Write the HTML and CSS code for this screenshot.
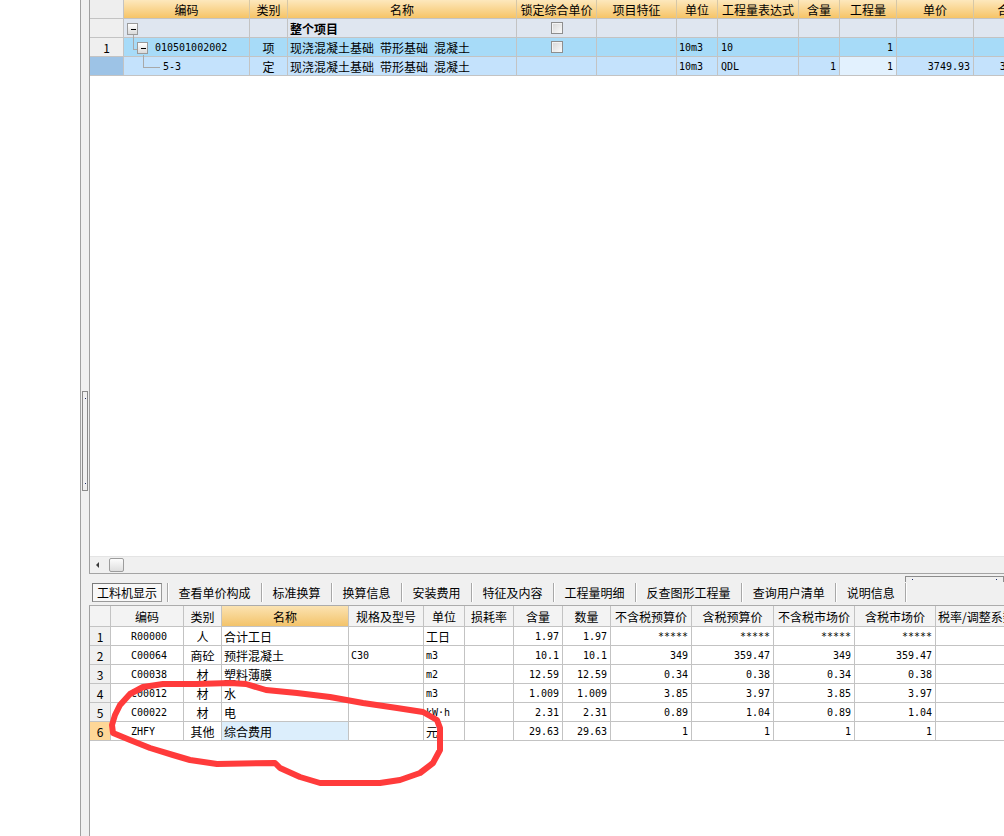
FILE: index.html
```html
<!DOCTYPE html>
<html lang="zh-CN">
<head>
<meta charset="utf-8">
<title>工料机显示</title>
<link rel="stylesheet" href="styles.css">
</head>
<body>
<div class="app">
  <div class="blank"></div>
  <div class="strip"><div class="vhandle"><i></i><i></i></div></div>
  <div class="main">
    <div class="top-panel">
      <div class="tgrid">
        <div class="tr thead">
          <div class="c rh"></div>
          <div class="c">编码</div>
          <div class="c">类别</div>
          <div class="c">名称</div>
          <div class="c">锁定综合单价</div>
          <div class="c">项目特征</div>
          <div class="c">单位</div>
          <div class="c">工程量表达式</div>
          <div class="c">含量</div>
          <div class="c">工程量</div>
          <div class="c">单价</div>
          <div class="c">合价</div>
        </div>
        <div class="tr r-all">
          <div class="c rh"></div>
          <div class="c tree"><span class="tbox b0"></span></div>
          <div class="c"></div>
          <div class="c l bold">整个项目</div>
          <div class="c ctr"><span class="chk"></span></div>
          <div class="c"></div>
          <div class="c"></div>
          <div class="c"></div>
          <div class="c"></div>
          <div class="c"></div>
          <div class="c"></div>
          <div class="c"></div>
        </div>
        <div class="tr r-item">
          <div class="c rh ctr">1</div>
          <div class="c tree l n p1"><span class="tline t1"></span><span class="tbox b1"></span>010501002002</div>
          <div class="c ctr">项</div>
          <div class="c l">现浇混凝土基础&ensp;带形基础&ensp;混凝土</div>
          <div class="c ctr"><span class="chk"></span></div>
          <div class="c"></div>
          <div class="c l n">10m3</div>
          <div class="c l n px">10</div>
          <div class="c"></div>
          <div class="c r n">1</div>
          <div class="c"></div>
          <div class="c"></div>
        </div>
        <div class="tr r-sub">
          <div class="c rh rh-sel"></div>
          <div class="c tree l n p2"><span class="tline t2"></span>5-3</div>
          <div class="c ctr">定</div>
          <div class="c l">现浇混凝土基础&ensp;带形基础&ensp;混凝土</div>
          <div class="c"></div>
          <div class="c"></div>
          <div class="c l n">10m3</div>
          <div class="c l n px">QDL</div>
          <div class="c r n">1</div>
          <div class="c r n cur">1</div>
          <div class="c r n">3749.93</div>
          <div class="c r n">3749.93</div>
        </div>
      </div>
      <div class="hscroll"><span class="arrow"></span><span class="thumb"></span></div>
    </div>

    <div class="gap"><div class="hhandle"><i></i><i></i></div></div>

    <div class="tabs">
      <div class="tab sel">工料机显示</div><div class="sep"></div>
      <div class="tab">查看单价构成</div><div class="sep"></div>
      <div class="tab">标准换算</div><div class="sep"></div>
      <div class="tab">换算信息</div><div class="sep"></div>
      <div class="tab">安装费用</div><div class="sep"></div>
      <div class="tab">特征及内容</div><div class="sep"></div>
      <div class="tab">工程量明细</div><div class="sep"></div>
      <div class="tab">反查图形工程量</div><div class="sep"></div>
      <div class="tab">查询用户清单</div><div class="sep"></div>
      <div class="tab">说明信息</div><div class="sep"></div>
    </div>

    <div class="bottom-panel">
      <div class="bgrid">
        <div class="br bhead">
          <div class="c"></div>
          <div class="c">编码</div>
          <div class="c">类别</div>
          <div class="c hsel">名称</div>
          <div class="c">规格及型号</div>
          <div class="c">单位</div>
          <div class="c">损耗率</div>
          <div class="c">含量</div>
          <div class="c">数量</div>
          <div class="c">不含税预算价</div>
          <div class="c">含税预算价</div>
          <div class="c">不含税市场价</div>
          <div class="c">含税市场价</div>
          <div class="c lft">税率/调整系数</div>
        </div>
        <div class="br">
          <div class="c rh ctr">1</div>
          <div class="c l n code">R00000</div>
          <div class="c ctr">人</div>
          <div class="c l">合计工日</div>
          <div class="c"></div>
          <div class="c l">工日</div>
          <div class="c"></div>
          <div class="c r n">1.97</div>
          <div class="c r n">1.97</div>
          <div class="c r n">*****</div>
          <div class="c r n">*****</div>
          <div class="c r n">*****</div>
          <div class="c r n">*****</div>
          <div class="c"></div>
        </div>
        <div class="br">
          <div class="c rh ctr">2</div>
          <div class="c l n code">C00064</div>
          <div class="c ctr">商砼</div>
          <div class="c l">预拌混凝土</div>
          <div class="c l n">C30</div>
          <div class="c l n">m3</div>
          <div class="c"></div>
          <div class="c r n">10.1</div>
          <div class="c r n">10.1</div>
          <div class="c r n">349</div>
          <div class="c r n">359.47</div>
          <div class="c r n">349</div>
          <div class="c r n">359.47</div>
          <div class="c"></div>
        </div>
        <div class="br">
          <div class="c rh ctr">3</div>
          <div class="c l n code">C00038</div>
          <div class="c ctr">材</div>
          <div class="c l">塑料薄膜</div>
          <div class="c"></div>
          <div class="c l n">m2</div>
          <div class="c"></div>
          <div class="c r n">12.59</div>
          <div class="c r n">12.59</div>
          <div class="c r n">0.34</div>
          <div class="c r n">0.38</div>
          <div class="c r n">0.34</div>
          <div class="c r n">0.38</div>
          <div class="c"></div>
        </div>
        <div class="br">
          <div class="c rh ctr">4</div>
          <div class="c l n code">C00012</div>
          <div class="c ctr">材</div>
          <div class="c l">水</div>
          <div class="c"></div>
          <div class="c l n">m3</div>
          <div class="c"></div>
          <div class="c r n">1.009</div>
          <div class="c r n">1.009</div>
          <div class="c r n">3.85</div>
          <div class="c r n">3.97</div>
          <div class="c r n">3.85</div>
          <div class="c r n">3.97</div>
          <div class="c"></div>
        </div>
        <div class="br">
          <div class="c rh ctr">5</div>
          <div class="c l n code">C00022</div>
          <div class="c ctr">材</div>
          <div class="c l">电</div>
          <div class="c"></div>
          <div class="c l n">kW·h</div>
          <div class="c"></div>
          <div class="c r n">2.31</div>
          <div class="c r n">2.31</div>
          <div class="c r n">0.89</div>
          <div class="c r n">1.04</div>
          <div class="c r n">0.89</div>
          <div class="c r n">1.04</div>
          <div class="c"></div>
        </div>
        <div class="br">
          <div class="c rh ctr rh-cur">6</div>
          <div class="c l n code">ZHFY</div>
          <div class="c ctr">其他</div>
          <div class="c l cur">综合费用</div>
          <div class="c"></div>
          <div class="c l">元</div>
          <div class="c"></div>
          <div class="c r n">29.63</div>
          <div class="c r n">29.63</div>
          <div class="c r n">1</div>
          <div class="c r n">1</div>
          <div class="c r n">1</div>
          <div class="c r n">1</div>
          <div class="c"></div>
        </div>
      </div>
    </div>
  </div>

  <svg class="scribble" width="1004" height="836" viewBox="0 0 1004 836">
    <path d="M246 684 L266 690 L297 693 L330 697 L363 703 L397 708 L423 712 L437 720 L440 728 L440 750 L433 763 L420 773 L400 780 L380 783 L320 783 L300 777 L280 768 L275 763 L217 764 L190 760 L173 755 L150 748 L130 740 L113 733 L112 725 L115 715 L120 705 L130 694 L143 687 L163 684 L197 684 L230 683 Z" fill="none" stroke="#ff3b3b" stroke-width="6" stroke-linejoin="round" stroke-linecap="round"/>
  </svg>
</div>
</body>
</html>
```

FILE: styles.css
```css
* { box-sizing: border-box; }
html, body { margin: 0; padding: 0; background: #fff; overflow: hidden; }
body {
  font-family: "Noto Sans CJK SC", "Noto Sans", sans-serif;
  font-size: 12px;
  color: #000;
}
.app {
  position: relative;
  display: flex;
  width: 1004px;
  height: 836px;
}
.blank { width: 80px; background: #fff; }
.strip {
  width: 9px;
  border-left: 1px solid #a0a0a0;
  background: #f0f0f0;
  padding: 391px 0 0 1px;
}
.vhandle {
  width: 6px;
  height: 100px;
  border: 1px solid #8a8a8a;
  display: flex;
  flex-direction: column;
  justify-content: space-between;
  align-items: center;
  padding: 6px 0;
}
.vhandle i, .hhandle i { display: block; width: 1px; height: 1px; background: #1c2a6a; }

.main {
  width: 915px;
  display: flex;
  flex-direction: column;
  background: #f0f0f0;
  overflow: hidden;
}
.top-panel {
  height: 574px;
  border-left: 1px solid #a0a0a0;
  border-bottom: 1px solid #a4a4a4;
  display: flex;
  flex-direction: column;
}
.tgrid { flex: 1; background: #fff; overflow: hidden; }
.hscroll {
  height: 17px;
  background: #f0f0f0;
  border-top: 1px solid #e4e4e4;
  display: flex;
  align-items: center;
  padding-left: 6px;
}
.arrow {
  width: 0; height: 0;
  border-right: 3px solid #3a3a3a;
  border-top: 3px solid transparent;
  border-bottom: 3px solid transparent;
}
.thumb {
  margin-left: 10px;
  width: 15px;
  height: 14px;
  border: 1px solid #9c9c9c;
  border-radius: 2px;
  background: linear-gradient(#fcfcfc, #dedede);
}

/* grid cells */
.c {
  display: flex;
  align-items: center;
  justify-content: center;
  border-right: 1px solid #c3c3c3;
  border-bottom: 1px solid #c3c3c3;
  white-space: nowrap;
  overflow: hidden;
  padding: 0 2px;
}
.c.l { justify-content: flex-start; }
.c.r { justify-content: flex-end; padding-right: 3px; }
.c.ctr { justify-content: center; }
.n { font-family: "DejaVu Sans Mono", "Liberation Mono", monospace; font-size: 10px; }
.bold { font-weight: bold; }
.px { padding-left: 3px; }

.tr {
  display: grid;
  grid-template-columns: 34px 126px 38px 229px 80px 80px 41px 81px 41px 57px 77px 72px;
  height: 19px;
}
.thead .c {
  background: linear-gradient(#fde8bd, #f6c467);
  border-right-color: #d6c7a6;
  border-bottom-color: #c3c3c3;
  padding: 0;
}
.thead .c.rh { background: #eeeeee; border-right-color: #c3c3c3; }
.c.rh { background: #efefef; }
.r-all .c { background: #dfe6f0; }
.r-item .c { background: #a7dbf8; }
.r-sub .c { background: #c4e2fc; }
.r-all .c.rh, .r-item .c.rh { background: #efefef; }
.r-sub .c.rh-sel { background: #9dc3e6; }
.r-sub .c.cur { background: #e2f1fe; }
.r-sub .c:last-child { justify-content: flex-end; }

.tree { position: relative; overflow: visible; }
.p1 { padding-left: 31px; }
.p2 { padding-left: 39px; }
.tbox {
  position: absolute;
  width: 11px;
  height: 12px;
  border: 1px solid #9a9a9a;
  background: linear-gradient(#ffffff, #dadada);
}
.tbox::after {
  content: "";
  position: absolute;
  left: 3px;
  top: 5px;
  width: 5px;
  height: 1px;
  background: #000;
}
.b0 { left: 3px; top: 4px; }
.b1 { left: 13px; top: 4px; }
.tline {
  position: absolute;
  border-left: 1px solid #a8a8a8;
  border-bottom: 1px solid #a8a8a8;
}
.t1 { left: 9px; top: -3px; width: 5px; height: 15px; }
.t2 { left: 19px; top: -2px; width: 17px; height: 13px; }

.chk {
  display: block;
  width: 12px;
  height: 12px;
  border: 1px solid #8e8e8e;
  background: linear-gradient(135deg, #d6d6d6, #fbfbfb);
  box-shadow: inset 1px 1px 0 #f4f4f4;
}

/* middle */
.gap {
  height: 8px;
  display: flex;
  justify-content: flex-end;
  align-items: flex-end;
}
.hhandle {
  width: 99px;
  height: 6px;
  border: 1px solid #8c8c8c;
  border-bottom: none;
  display: flex;
  justify-content: space-between;
  align-items: center;
  padding: 0 6px;
}
.tabs {
  height: 21px;
  display: flex;
  align-items: stretch;
  padding-left: 3px;
}
.tab {
  display: flex;
  align-items: center;
  padding: 0 10.5px;
  white-space: nowrap;
}
.tab.sel {
  margin: 1px 5px 1px 0;
  padding: 0 4px;
  border: 1px solid #7c7c7c;
  border-right-color: #9a9a9a;
  border-bottom-color: #9a9a9a;
  background: #f8f8f8;
}
.sep {
  width: 1px;
  margin: 1px 0;
  background: #a8a8a8;
  box-shadow: 1px 0 0 #ffffff;
}

/* bottom grid */
.bottom-panel {
  flex: 1;
  margin-top: 2px;
  background: #fff;
  border-left: 1px solid #a0a0a0;
  border-top: 1px solid #acacac;
  overflow: hidden;
}
.br {
  display: grid;
  grid-template-columns: 21px 73px 38px 127px 75px 41px 49px 49px 48px 81px 82px 81px 81px 90px;
  height: 19px;
}
.bhead { height: 21px; }
.bhead .c { background: #f3f3f3; padding: 0; }
.bhead .c.hsel { background: linear-gradient(#fbe3b2, #f3c36a); }
.bhead .c.lft { justify-content: flex-start; padding-left: 2px; }
.br .c.rh { background: #f0f0f0; }
.br .c.rh-cur { background: #fed797; }
.br .c.cur { background: #dceefc; }
.br .c.code { padding-left: 20px; }

.scribble {
  position: absolute;
  left: 0;
  top: 0;
  pointer-events: none;
}
```
